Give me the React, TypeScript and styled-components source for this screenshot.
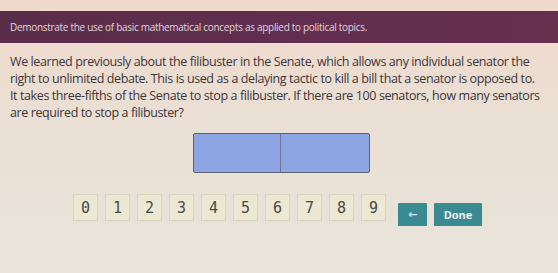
import React from "react";
import styled, { createGlobalStyle } from "styled-components";

const Global = createGlobalStyle`
  html, body { margin: 0; padding: 0; }
  body { background: #e9e1d6; }
`;

const Page = styled.div`
  width: 558px;
  height: 273px;
  overflow: hidden;
  background: linear-gradient(180deg, #f0d9cb 0%, #ebdfd4 40%, #e8e4da 100%);
  display: flex;
  flex-direction: column;
  font-family: "Open Sans", sans-serif;
`;

const Header = styled.div`
  margin-top: 11px;
  height: 32px;
  background: linear-gradient(90deg, #5a2d4a 0%, #622f50 60%, #66304f 100%);
  display: flex;
  align-items: center;
  padding-left: 10px;
  color: #e2d4de;
  font-size: 10px;
  letter-spacing: -0.3px;
`;

const Question = styled.p`
  margin: 10px 0 0 10px;
  font-family: "Open Sans", sans-serif;
  font-size: 12.5px;
  line-height: 17px;
  letter-spacing: -0.4px;
  color: #3d363b;
`;

const Line = styled.span`
  display: block;
  white-space: nowrap;
`;

const AnswerRow = styled.div`
  display: flex;
  justify-content: flex-start;
  padding-left: 193px;
  margin-top: 12px;
`;

const AnswerBox = styled.div`
  width: 175px;
  height: 38px;
  display: grid;
  grid-template-columns: 87px 1fr;
  border: 1px solid #5d6170;
  border-radius: 2px;
  background: #8ea5e4;
`;

const Cell = styled.div<{ $divider?: boolean }>`
  border-right: ${(p) => (p.$divider ? "1px solid #6d7592" : "none")};
`;

const Keypad = styled.div`
  display: flex;
  align-items: flex-start;
  margin-top: 21px;
  padding-left: 73px;
`;

const Digits = styled.div`
  display: flex;
  gap: 7px;
`;

const Key = styled.div`
  width: 25px;
  height: 27px;
  box-sizing: border-box;
  background: #ece8d3;
  border: 1px solid #d9d6c2;
  display: flex;
  align-items: center;
  justify-content: center;
  font-family: "DejaVu Sans Mono", monospace;
  font-size: 15px;
  color: #4a4a45;
`;

const Action = styled.div<{ $w: number }>`
  width: ${(p) => p.$w}px;
  height: 23px;
  margin-top: 9px;
  background: #3a8a92;
  color: #eef4f4;
  display: flex;
  align-items: center;
  justify-content: center;
  font-family: "Open Sans", sans-serif;
  font-weight: 700;
  font-size: 11px;
  border-radius: 1px;
`;

const Arrow = styled.span`
  font-family: "DejaVu Sans", sans-serif;
  font-size: 11px;
  color: #cfe6e8;
`;

const Actions = styled.div`
  display: flex;
  gap: 7px;
  margin-left: 12px;
`;

export default function App() {
  const digits = ["0", "1", "2", "3", "4", "5", "6", "7", "8", "9"];
  return (
    <>
      <Global />
      <Page>
        <Header>Demonstrate the use of basic mathematical concepts as applied to political topics.</Header>
        <Question>
          <Line>We learned previously about the filibuster in the Senate, which allows any individual senator the</Line>
          <Line>right to unlimited debate. This is used as a delaying tactic to kill a bill that a senator is opposed to.</Line>
          <Line>It takes three-fifths of the Senate to stop a filibuster. If there are 100 senators, how many senators</Line>
          <Line>are required to stop a filibuster?</Line>
        </Question>
        <AnswerRow>
          <AnswerBox>
            <Cell $divider />
            <Cell />
          </AnswerBox>
        </AnswerRow>
        <Keypad>
          <Digits>
            {digits.map((d) => (
              <Key key={d}>{d}</Key>
            ))}
          </Digits>
          <Actions>
            <Action $w={29}>
              <Arrow>←</Arrow>
            </Action>
            <Action $w={48}>Done</Action>
          </Actions>
        </Keypad>
      </Page>
    </>
  );
}
